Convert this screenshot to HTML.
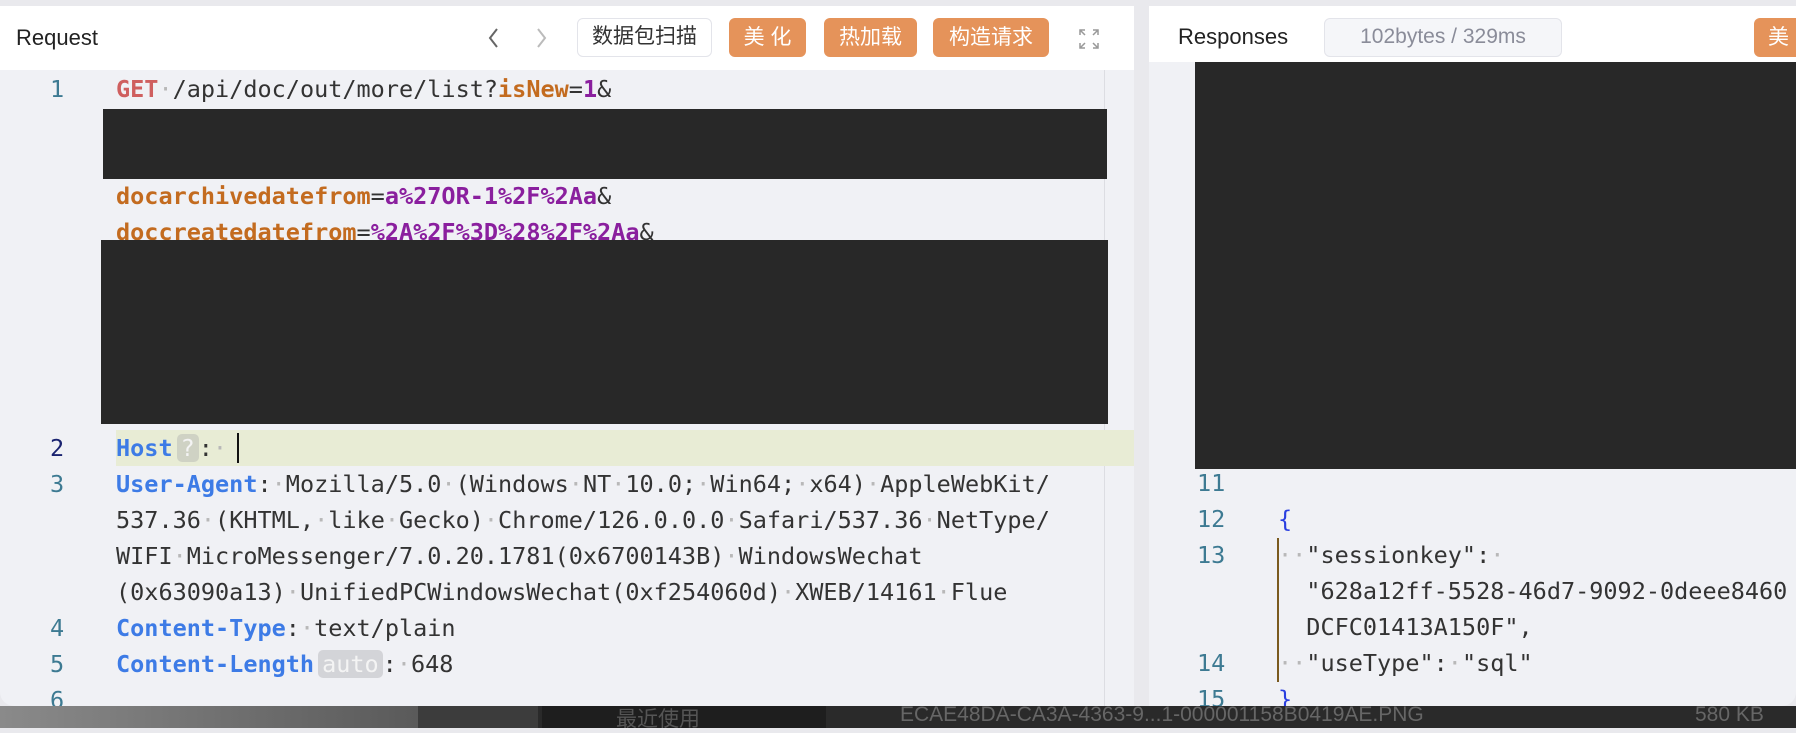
<!DOCTYPE html>
<html><head><meta charset="utf-8"><style>
*{margin:0;padding:0;box-sizing:border-box}
body{width:1796px;height:728px;overflow:hidden;background:#e9e9ed;position:relative;font-family:"Liberation Sans","Noto Sans CJK SC",sans-serif}
.abs{position:absolute}
.panel{position:absolute;top:6px;background:#f0f1f5;overflow:hidden}
.hdr{position:absolute;left:0;right:0;top:0;background:#fff}
.btn{position:absolute;top:12px;height:39px;border-radius:6px;font-size:21px;line-height:39px;text-align:center}
.or{background:#e5935a;color:#fff}
.code{position:absolute;font-family:"DejaVu Sans Mono","Liberation Mono",monospace;font-size:23.5px;line-height:36px;white-space:pre;color:#333}
.ln{position:absolute;font-family:"DejaVu Sans Mono","Liberation Mono",monospace;font-size:23.5px;line-height:36px;color:#3d7a92}
.d{color:#b8b8b8}
.k{color:#3d7be6;font-weight:bold}
.o{color:#c36b1f;font-weight:bold}
.p{color:#8a1f9e;font-weight:bold}
.blk{position:absolute;background:#282828}
</style></head><body>
<div class="panel" style="left:0;width:1134px;height:700px;border-bottom-left-radius:14px">
 <div class="hdr" style="height:64px">
  <div class="abs" style="left:16px;top:19px;font-size:22px;color:#222">Request</div>
  <svg class="abs" style="left:486px;top:20px" width="16" height="24"><path d="M11 3 L4 12 L11 21" stroke="#666" stroke-width="2" fill="none"/></svg>
  <svg class="abs" style="left:533px;top:20px" width="16" height="24"><path d="M5 3 L12 12 L5 21" stroke="#bbb" stroke-width="2" fill="none"/></svg>
  <div class="btn" style="left:577px;width:135px;border:1.5px solid #e3e4ea;color:#333;background:#fff;line-height:36px">数据包扫描</div>
  <div class="btn or" style="left:729px;width:77px">美 化</div>
  <div class="btn or" style="left:824px;width:93px">热加载</div>
  <div class="btn or" style="left:933px;width:116px">构造请求</div>
  <svg class="abs" style="left:1079px;top:23px" width="20" height="20" stroke="#999" stroke-width="1.5" fill="none"><path d="M1 6V1H6M14 1H19V6M19 14V19H14M6 19H1V14M1 1L6 6M19 1L14 6M19 19L14 14M1 19L6 14"/></svg>
 </div>
 <div class="abs" style="left:1104px;top:64px;width:1px;height:640px;background:#dcdde2"></div>
 <div class="abs" style="left:1105px;top:424px;width:25px;height:4px;background:#777"></div>
 <div class="abs" style="left:116px;top:424px;width:1018px;height:36px;background:#e8ecd5"></div>
 <div class="abs" style="left:237px;top:427px;width:2px;height:30px;background:#111"></div>
 <div class="ln" style="left:50px;top:65px">1</div>
 <div class="code" style="left:116px;top:65px"><span style="color:#cf5f5f;font-weight:bold">GET</span><span class="d">·</span>/api/doc/out/more/list?<span class="o">isNew</span>=<span class="p">1</span>&amp;</div>
 <div class="blk" style="left:103px;top:103px;width:1004px;height:70px"></div>
 <div class="code" style="left:116px;top:172px"><span class="o">docarchivedatefrom</span>=<span class="p">a%27OR-1%2F%2Aa</span>&amp;
<span class="o">doccreatedatefrom</span>=<span class="p">%2A%2F%3D%28%2F%2Aa</span>&amp;</div>
 <div class="blk" style="left:101px;top:234px;width:1007px;height:184px"></div>
 <div class="ln" style="left:50px;top:424px;color:#1a2370">2</div>
 <div class="ln" style="left:50px;top:460px">3</div>
 <div class="ln" style="left:50px;top:604px">4</div>
 <div class="ln" style="left:50px;top:640px">5</div>
 <div class="ln" style="left:50px;top:676px">6</div>
 <div class="code" style="left:116px;top:424px"><span class="k">Host</span><span style="background:#cfd2c4;color:#f4f4f4;border-radius:5px;padding:0 4px;margin-left:4px">?</span>:<span class="d">·</span>
<span class="k">User-Agent</span>:<span class="d">·</span>Mozilla/5.0<span class="d">·</span>(Windows<span class="d">·</span>NT<span class="d">·</span>10.0;<span class="d">·</span>Win64;<span class="d">·</span>x64)<span class="d">·</span>AppleWebKit/
537.36<span class="d">·</span>(KHTML,<span class="d">·</span>like<span class="d">·</span>Gecko)<span class="d">·</span>Chrome/126.0.0.0<span class="d">·</span>Safari/537.36<span class="d">·</span>NetType/
WIFI<span class="d">·</span>MicroMessenger/7.0.20.1781(0x6700143B)<span class="d">·</span>WindowsWechat
(0x63090a13)<span class="d">·</span>UnifiedPCWindowsWechat(0xf254060d)<span class="d">·</span>XWEB/14161<span class="d">·</span>Flue
<span class="k">Content-Type</span>:<span class="d">·</span>text/plain
<span class="k">Content-Length</span><span style="background:#d3d4d8;color:#f4f4f4;border-radius:5px;padding:0 4px;margin-left:4px">auto</span>:<span class="d">·</span>648</div>
</div>
<div class="panel" style="left:1149px;width:647px;height:700px;border-bottom-right-radius:14px">
 <div class="hdr" style="height:56px">
  <div class="abs" style="left:29px;top:18px;font-size:22px;color:#222">Responses</div>
  <div class="abs" style="left:175px;top:12px;width:238px;height:39px;border:1.5px solid #e3e4ea;background:#f5f6f9;border-radius:6px;color:#8a8c99;font-size:21px;line-height:36px;text-align:center">102bytes / 329ms</div>
  <div class="btn or" style="left:605px;width:60px;text-align:left;padding-left:14px">美</div>
 </div>
 <div class="blk" style="left:46px;top:56px;width:601px;height:407px"></div>
 <div class="ln" style="left:48px;top:459px">11</div>
 <div class="ln" style="left:48px;top:495px">12</div>
 <div class="ln" style="left:48px;top:531px">13</div>
 <div class="ln" style="left:48px;top:639px">14</div>
 <div class="ln" style="left:48px;top:675px">15</div>
 <div class="abs" style="left:128px;top:532px;width:2px;height:144px;background:#7a5a1e"></div>
 <div class="code" style="left:129px;top:495px"><span style="color:#2a3fe0">{</span>
<span class="d">··</span>"sessionkey":<span class="d">·</span>
  "628a12ff-5528-46d7-9092-0deee8460
  DCFC01413A150F",
<span class="d">··</span>"useType":<span class="d">·</span>"sql"
<span style="color:#2a3fe0">}</span></div>
</div>
<div class="abs" style="left:0;top:706px;width:1796px;height:22px;background:#2a2a2a;z-index:-1"></div>
<div class="abs" style="left:0;top:706px;width:418px;height:22px;background:linear-gradient(90deg,#8a8a8a,#5a5a5a);z-index:-1"></div>
<div class="abs" style="left:418px;top:706px;width:120px;height:22px;background:#3c3c3c;z-index:-1"></div>
<div class="abs" style="left:542px;top:706px;width:284px;height:22px;background:#1e1e1e;z-index:-1"></div>
<div class="abs" style="left:616px;top:703px;font-size:21px;color:#555;z-index:-1">最近使用</div>
<div class="abs" style="left:900px;top:703px;font-size:21px;color:#666;z-index:-1">ECAE48DA-CA3A-4363-9...1-000001158B0419AE.PNG</div>
<div class="abs" style="left:1695px;top:703px;font-size:21px;color:#666;z-index:-1">580 KB</div>
</body></html>
